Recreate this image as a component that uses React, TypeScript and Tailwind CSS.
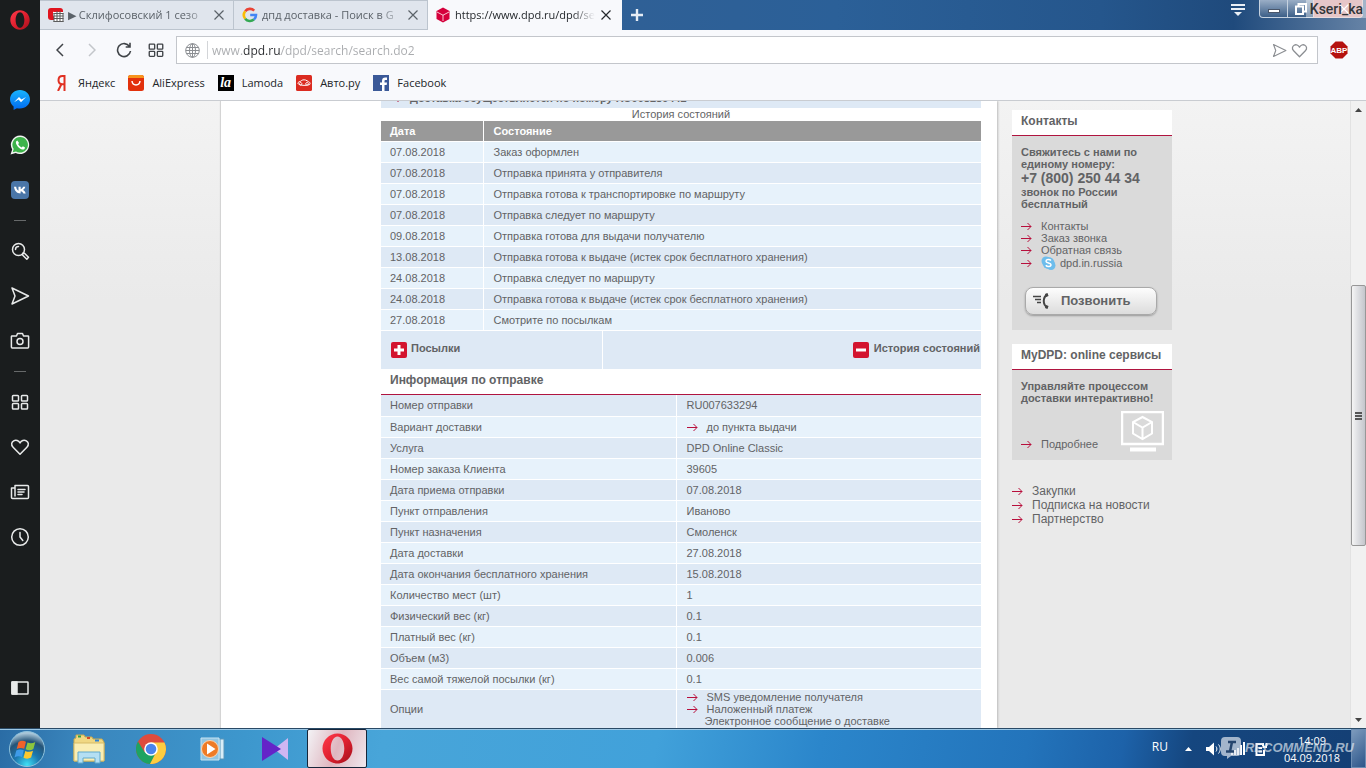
import type { ReactNode } from "react";

type StateRow = { date: string; state: string };

const tabs = [
  { title: "▶ Склифосовский 1 сезо", icon: "youtube", active: false },
  { title: "дпд доставка - Поиск в G", icon: "google", active: false },
  { title: "https://www.dpd.ru/dpd/se", icon: "dpd", active: true },
];

const bookmarks = [
  { label: "Яндекс", icon: "yandex" },
  { label: "AliExpress", icon: "ali" },
  { label: "Lamoda", icon: "lamoda" },
  { label: "Авто.ру", icon: "auto" },
  { label: "Facebook", icon: "facebook" },
];

const states: StateRow[] = [
  { date: "07.08.2018", state: "Заказ оформлен" },
  { date: "07.08.2018", state: "Отправка принята у отправителя" },
  { date: "07.08.2018", state: "Отправка готова к транспортировке по маршруту" },
  { date: "07.08.2018", state: "Отправка следует по маршруту" },
  { date: "09.08.2018", state: "Отправка готова для выдачи получателю" },
  {
    date: "13.08.2018",
    state: "Отправка готова к выдаче (истек срок бесплатного хранения)",
  },
  { date: "24.08.2018", state: "Отправка следует по маршруту" },
  {
    date: "24.08.2018",
    state: "Отправка готова к выдаче (истек срок бесплатного хранения)",
  },
  { date: "27.08.2018", state: "Смотрите по посылкам" },
];

const info = [
  ["Номер отправки", "RU007633294"],
  ["Вариант доставки", "до пункта выдачи"],
  ["Услуга", "DPD Online Classic"],
  ["Номер заказа Клиента", "39605"],
  ["Дата приема отправки", "07.08.2018"],
  ["Пункт отправления", "Иваново"],
  ["Пункт назначения", "Смоленск"],
  ["Дата доставки", "27.08.2018"],
  ["Дата окончания бесплатного хранения", "15.08.2018"],
  ["Количество мест (шт)", "1"],
  ["Физический вес (кг)", "0.1"],
  ["Платный вес (кг)", "0.1"],
  ["Объем (м3)", "0.006"],
  ["Вес самой тяжелой посылки (кг)", "0.1"],
];

function OperaLogo({ size, id }: { size: number; id: string }) {
  return (
    <svg width={size} height={size} viewBox="0 0 32 32">
      <defs>
        <linearGradient id={id} x1="0" y1="0" x2="1" y2="1">
          <stop offset="0" stopColor="#ff3b4c" />
          <stop offset="0.5" stopColor="#e0202f" />
          <stop offset="1" stopColor="#a3101c" />
        </linearGradient>
      </defs>
      <path
        fill={`url(#${id})`}
        fillRule="evenodd"
        d="M16 0.5C7.5 0.5 0.5 7.4 0.5 16S7.500 31.500 16 31.500 31.500 24.600 31.500 16 24.500 0.500 16 0.500Zm0 3c4 0 7 5.400 7 12.500s-3 12.500-7 12.500-7-5.400-7-12.500S12 3.500 16 3.500Z"
      />
    </svg>
  );
}

function Line({ children, size = 20 }: { children: ReactNode; size?: number }) {
  return (
    <svg
      width={size}
      height={size}
      viewBox="0 0 20 20"
      fill="none"
      stroke="currentColor"
      strokeWidth="1.5"
      strokeLinecap="round"
      strokeLinejoin="round"
    >
      {children}
    </svg>
  );
}

function GridIcon({ size }: { size?: number }) {
  return (
    <Line size={size}>
      <rect x="2.500" y="3.500" width="6" height="5.500" rx="0.800" />
      <rect x="11.500" y="3.500" width="6" height="5.500" rx="0.800" />
      <rect x="2.500" y="11.500" width="6" height="5.500" rx="0.800" />
      <rect x="11.500" y="11.500" width="6" height="5.500" rx="0.800" />
    </Line>
  );
}

function HeartIcon({ size }: { size?: number }) {
  return (
    <Line size={size}>
      <path d="M10 17.300 3.100 10.300C.6 7.700 1.700 4.900 3.700 3.800 6 2.500 8.700 3.600 10 6c1.300-2.400 4-3.500 6.300-2.200 2 1.100 3.100 3.900.6 6.500L10 17.300Z" />
    </Line>
  );
}

function SendIcon({ size }: { size?: number }) {
  return (
    <Line size={size}>
      <path d="M2 2 18.500 10 2 18l3-8L2 2Z" />
    </Line>
  );
}

function CloseIcon() {
  return (
    <svg width="10" height="10" viewBox="0 0 10 10" stroke="currentColor" strokeWidth="1.200">
      <path d="M.5.5l9 9M9.500.5l-9 9" />
    </svg>
  );
}

function Arrow() {
  return (
    <svg
      className="shrink-0"
      width="11"
      height="9"
      viewBox="0 0 11 9"
      fill="none"
      stroke="#b80f3c"
      strokeWidth="1"
    >
      <path d="M0 4.500h10M6.500 1l3.500 3.500L6.500 8" />
    </svg>
  );
}

function SiteIcon({ name }: { name: string }) {
  const common = { width: 16, height: 16, viewBox: "0 0 16 16", className: "shrink-0" };
  switch (name) {
    case "youtube":
      return (
        <svg {...common}>
          <rect y="1" width="15" height="12" rx="3" fill="#e0141e" />
          <path d="M5 4.500v5l3-2.500z" fill="#fff" />
          <rect x="6" y="5" width="9" height="10" fill="#fff" />
          <path
            d="M5.500 6.500h10M5.500 9h10M5.500 11.500h10M5.500 14.500h10M6 6v9M9 4v11M12 4v11M15 6v9"
            stroke="#5c5c5c"
            strokeWidth="1"
          />
        </svg>
      );
    case "google":
      return (
        <svg {...common} fill="none" strokeWidth="2.600">
          <path d="M3.200 4.300A6 6 0 0 1 12.200 3.600" stroke="#ea4335" />
          <path d="M3.200 4.300a6 6 0 0 0 0 7.400" stroke="#fbbc05" />
          <path d="M3.200 11.700a6 6 0 0 0 8.700.9" stroke="#34a853" />
          <path d="M11.900 12.600A6 6 0 0 0 14 8H8.200" stroke="#4285f4" />
        </svg>
      );
    case "dpd":
      return (
        <svg {...common}>
          <path d="M8 .5 14.500 4v8L8 15.500 1.500 12V4z" fill="#d5003c" />
          <path d="m2 5 6 3.200L14 5M8 8v6" stroke="#f8c6d3" fill="none" />
        </svg>
      );
    case "yandex":
      return (
        <svg {...common} fill="none" stroke="#e03022" strokeWidth="2">
          <path d="M10.500 16V1H8.500C5.800 1 4.500 3 4.500 5.200s1.200 4 4 4h2M7.500 9 4 16" />
        </svg>
      );
    case "ali":
      return (
        <svg {...common}>
          <rect width="16" height="16" rx="2.500" fill="#e2310c" />
          <path d="M0 3V2.500A2.500 2.500 0 0 1 2.500 0h11A2.500 2.500 0 0 1 16 2.500V3z" fill="#f7941d" />
          <path d="M4 6c.6 5.300 7.400 5.300 8 0" stroke="#fff" strokeWidth="1.500" fill="none" />
        </svg>
      );
    case "lamoda":
      return (
        <span className="flex size-4 shrink-0 items-center justify-center bg-black font-['Liberation_Serif',serif] text-sm leading-4 font-bold text-white italic">
          la
        </span>
      );
    case "auto":
      return (
        <svg {...common}>
          <rect width="16" height="16" rx="1.500" fill="#db2b20" />
          <path
            d="M2 8.500C2 6.800 3.500 6.500 4.800 6.200 6 4.800 7.500 4.600 9.500 5c1.500.3 2 1.300 3 1.700 1.300.4 1.700 1.300 1.500 2.500-1 1.500-11 1.800-12-.7Zm2.500-1a1.300 1.300 0 1 0 .1 0m6.400 0a1.300 1.300 0 1 0 .1 0"
            stroke="#fff"
            fill="none"
          />
        </svg>
      );
    default:
      return (
        <svg {...common}>
          <rect width="16" height="16" fill="#3b5998" />
          <path
            d="M9 16v-6H7V7.500h2V6c0-2.300 1.200-3.400 3.300-3.400H14V5h-1.300C11.800 5 11.500 5.400 11.500 6.200v1.300H14L13.700 10h-2.200v6z"
            fill="#fff"
          />
        </svg>
      );
  }
}

function SideButton({ label, children }: { label: string; children: ReactNode }) {
  return (
    <button aria-label={label} className="flex h-[45px] w-full items-center justify-center">
      {children}
    </button>
  );
}

function SideRule() {
  return (
    <div className="flex h-4 items-center">
      <div className="h-px w-3 bg-[#66696a]" />
    </div>
  );
}

function OperaSidebar() {
  return (
    <nav className="flex w-10 shrink-0 flex-col items-center bg-[#1a1d1e] pb-[18px] text-[#e8eaea]">
      <button aria-label="Меню" className="mb-[37px] flex size-10 items-center justify-center">
        <OperaLogo size={20} id="side-opera" />
      </button>
      <SideButton label="Messenger">
        <svg width="20" height="20" viewBox="0 0 20 20">
          <defs>
            <linearGradient id="msg" x1="0" y1="0" x2="0" y2="1">
              <stop offset="0" stopColor="#18b4ff" />
              <stop offset="1" stopColor="#0068f0" />
            </linearGradient>
          </defs>
          <path
            d="M10 0C4.400 0 0 4.100 0 9.300c0 2.900 1.400 5.500 3.600 7.200V20l3.300-1.800c1 .3 2 .4 3.100.4 5.600 0 10-4.100 10-9.300S15.600 0 10 0Z"
            fill="url(#msg)"
          />
          <path d="m4 12.200 5-5.300 2.500 2.600 4.500-2.600-5 5.300-2.500-2.600z" fill="#fff" />
        </svg>
      </SideButton>
      <SideButton label="WhatsApp">
        <svg width="20" height="20" viewBox="0 0 20 20">
          <path
            d="M10.200.5a9.300 9.300 0 0 0-8 14L.5 19.500l5.200-1.400A9.300 9.300 0 1 0 10.200.5Z"
            fill="#f2f5f2"
          />
          <path
            d="M10.200 2a7.800 7.800 0 0 0-6.500 12.100l-1 3.200 3.300-.9A7.800 7.800 0 1 0 10.200 2Z"
            fill="#3db34a"
          />
          <path
            d="M7.300 5.500c-1.800.7-1.700 2.500-.7 4.200 1.400 2.400 3 3.900 5.400 4.700 1.700.5 3-.5 3-2l-2.100-1.200-1.200 1.200c-1.700-.7-2.900-1.900-3.600-3.300l1-1.200z"
            fill="#fff"
          />
        </svg>
      </SideButton>
      <SideButton label="ВКонтакте">
        <svg width="18" height="18" viewBox="0 0 18 18">
          <rect width="18" height="18" rx="4" fill="#4a76a8" />
          <path
            d="M9.500 12.500C5.800 12.500 3.500 9.800 3 5.800h2.200c.2 2 1 3.400 2.300 3.900V5.800h2.200v2.400c1.200-.3 2-1.200 2.400-2.400h2.200c-.4 1.500-1.200 2.500-2.300 3.200 1.300.6 2.200 1.700 2.700 3.500h-2.300c-.5-1.200-1.400-2-2.700-2.300z"
            fill="#fff"
          />
        </svg>
      </SideButton>
      <SideRule />
      <SideButton label="Поиск">
        <Line>
          <circle cx="8.500" cy="8.500" r="6" />
          <path d="M5.500 8.500c0-1.800 1.200-3 3-3M13 12l1.500.3 4 4-1.700 2-4.300-4.300z" />
        </Line>
      </SideButton>
      <SideButton label="Поток">
        <SendIcon />
      </SideButton>
      <SideButton label="Снимок">
        <Line>
          <path d="M2 5h4.500L7.500 2.500h5l1 2.500H18a.6.6 0 0 1 .6.6v10.500a.8.800 0 0 1-.8.800H2.200a.8.800 0 0 1-.8-.8V5.600A.6.600 0 0 1 2 5Z" />
          <circle cx="10" cy="10.500" r="3" />
        </Line>
      </SideButton>
      <SideRule />
      <SideButton label="Экспресс-панель">
        <GridIcon />
      </SideButton>
      <SideButton label="Закладки">
        <HeartIcon />
      </SideButton>
      <SideButton label="Новости">
        <Line>
          <path d="M5 3.500h12.500a1 1 0 0 1 1 1v11a1 1 0 0 1-1 1h-15a1 1 0 0 1-1-1v-9.500H5m0-2.500V14M8 7.500h7M8 10h6M8 12.500h4" />
        </Line>
      </SideButton>
      <SideButton label="История">
        <Line>
          <circle cx="10" cy="10" r="8.300" />
          <path d="M10 5.500V10l2.800 3.500" />
        </Line>
      </SideButton>
      <div className="mt-auto w-full">
        <SideButton label="Боковая панель">
          <Line>
            <rect x="2" y="4" width="16" height="12" rx="0.500" />
            <path d="M2 4h5v12H2z" fill="currentColor" />
          </Line>
        </SideButton>
      </div>
    </nav>
  );
}

function TitleBar() {
  return (
    <div className="relative flex h-[30px] shrink-0 bg-[linear-gradient(90deg,#3a6b9f_0%,#2f6096_45%,#2b6098_60%,#25568c_80%,#1f4a7c_90%,#6683a6_100%)]">
      {tabs.map((tab) => (
        <div
          key={tab.icon}
          className={
            tab.active
              ? "flex w-[194px] items-center bg-[#f8f9fc] pr-[11px] pl-[7px] text-[#24282c]"
              : "flex w-[194px] items-center border-t border-r border-b border-[#bcc4ce] bg-[#e0e5ed] pr-[9px] pl-2 text-[#5b6269]"
          }
        >
          <SiteIcon name={tab.icon} />
          <button className="ml-1 h-5 flex-1 overflow-hidden text-left text-[11px] leading-5 whitespace-nowrap [mask-image:linear-gradient(90deg,#000_84%,transparent)]">
            {tab.title}
          </button>
          <button aria-label="Закрыть вкладку" className="ml-1.5">
            <CloseIcon />
          </button>
        </div>
      ))}
      <button aria-label="Новая вкладка" className="flex w-[30px] items-center justify-center">
        <svg width="12" height="12" viewBox="0 0 12 12" stroke="#e6edf5" strokeWidth="2.400">
          <path d="M6 0v12M0 6h12" />
        </svg>
      </button>
      <div className="ml-auto flex items-start pr-[3px]">
        <button aria-label="Меню вкладок" className="mt-1 mr-3.5">
          <svg width="14" height="13" viewBox="0 0 14 13" fill="#e9eff6">
            <path d="M0 0h14v2H0zM0 4h14v2H0zM3 8h8l-4 4z" />
          </svg>
        </button>
        <button
          aria-label="Свернуть"
          className="flex h-[18px] w-[29px] items-center justify-center rounded-bl border border-t-0 border-[#c6d2e0] bg-[linear-gradient(#9aaec6,#3c5f88)] pt-1"
        >
          <svg width="12" height="4" viewBox="0 0 12 4">
            <rect x="0.500" y="0.500" width="11" height="3" fill="#fff" stroke="#49566a" />
          </svg>
        </button>
        <button
          aria-label="Развернуть"
          className="flex h-[18px] w-[25px] items-center justify-center border-b border-[#c6d2e0] bg-[linear-gradient(#9aaec6,#3c5f88)]"
        >
          <svg width="12" height="12" viewBox="0 0 12 12" fill="none" stroke="#fff" strokeWidth="2">
            <path d="M3.500 3V1H11v7.500H9M1 3.500h7V11H1z" />
          </svg>
        </button>
        <button
          aria-label="Закрыть"
          className="flex h-[18px] w-[50px] items-center justify-center rounded-br border border-t-0 border-[#dcc5c9] bg-[#d5a0a4] pl-3 text-white"
        >
          <CloseIcon />
        </button>
      </div>
      <div className="absolute top-0 right-0 h-[18px] bg-white/40 pr-[3px] pl-1 font-[Roboto,sans-serif] text-sm leading-[18px] font-medium text-[#33363a]">
        Kseri_ka
      </div>
    </div>
  );
}

function Toolbar() {
  return (
    <div className="flex h-10 shrink-0 items-center bg-[#f8f9fc] pr-[18px] pl-2.5 text-[#3f4347]">
      <button aria-label="Назад" className="flex w-5 justify-center">
        <svg width="8" height="14" viewBox="0 0 8 14" fill="none" stroke="currentColor" strokeWidth="1.500">
          <path d="m7 1-6 6 6 6" />
        </svg>
      </button>
      <button aria-label="Вперед" className="ml-3 flex w-5 justify-center text-[#c3c6ca]">
        <svg width="8" height="14" viewBox="0 0 8 14" fill="none" stroke="currentColor" strokeWidth="1.500">
          <path d="m1 1 6 6-6 6" />
        </svg>
      </button>
      <button aria-label="Обновить" className="ml-3 flex w-5 justify-center">
        <svg width="16" height="16" viewBox="0 0 16 16" fill="none" stroke="currentColor" strokeWidth="1.600">
          <path d="M13.500 4.500A6.500 6.500 0 1 0 14.500 9M14 .8V5H9.700" />
        </svg>
      </button>
      <button aria-label="Экспресс-панель" className="ml-3 flex w-5 justify-center">
        <GridIcon size={18} />
      </button>
      <div className="ml-2.5 flex h-7 flex-1 items-center border border-[#c3c6cb] bg-white pr-[9px] pl-2 text-[#8b8e92]">
        <svg width="15" height="15" viewBox="0 0 15 15" fill="none" stroke="currentColor">
          <circle cx="7.500" cy="7.500" r="6.800" />
          <ellipse cx="7.500" cy="7.500" rx="3" ry="6.800" />
          <path d="M7.500.7v13.600M.7 7.500h13.600M1.500 4.500h12M1.500 10.500h12" />
        </svg>
        <div className="ml-[7px] h-[18px] w-px bg-[#d3d5d8]" />
        <input
          aria-label="Адрес"
          defaultValue="www.dpd.ru/dpd/search/search.do2"
          className="ml-1 h-6 min-w-0 flex-1 bg-[linear-gradient(90deg,#a9abae_31px,#2b2d30_31px,#2b2d30_69px,#a9abae_69px)] bg-clip-text text-xs text-transparent outline-none"
        />
        <button aria-label="Отправить в Поток" className="mr-1">
          <SendIcon size={15} />
        </button>
        <button aria-label="В закладки">
          <HeartIcon size={17} />
        </button>
      </div>
      <button aria-label="Adblock Plus" className="ml-3">
        <svg width="18" height="18" viewBox="0 0 18 18">
          <path d="M5.500.5h7l5 5v7l-5 5h-7l-5-5v-7z" fill="#b5120f" />
          <text
            x="9"
            y="12"
            textAnchor="middle"
            fontSize="8"
            fontWeight="bold"
            fontFamily="Liberation Sans, sans-serif"
            fill="#fff"
          >
            ABP
          </text>
        </svg>
      </button>
    </div>
  );
}

function Bookmarks() {
  return (
    <div className="flex h-[31px] shrink-0 items-center gap-[13px] border-b border-[#c9ccd1] bg-[#f8f9fc] pb-1 pl-3.5 text-[11px] text-[#222528]">
      {bookmarks.map((item) => (
        <a key={item.label} href="#" className="flex items-center gap-2">
          <SiteIcon name={item.icon} />
          {item.label}
        </a>
      ))}
    </div>
  );
}

function ArrowLink({ children }: { children: ReactNode }) {
  return (
    <li>
      <a href="#" className="flex items-center gap-[9px]">
        <Arrow />
        {children}
      </a>
    </li>
  );
}

function Tracking() {
  return (
    <main className="w-[777px] shrink-0 border-l border-[#d4d4d4] bg-white pr-4 pl-40 shadow-[1px_0_2px_#bbb]">
      <div className="flex h-[7px] items-end overflow-hidden bg-[#dee9f5] pb-1 pl-2.5 font-bold">
        <p className="flex items-center gap-2 leading-3">
          <Arrow />
          Доставка осуществляется по номеру RU008286442
        </p>
      </div>

      <table className="w-full table-fixed">
        <caption className="h-[13px] leading-[13px]">История состояний</caption>
        <colgroup>
          <col className="w-[102px]" />
          <col />
        </colgroup>
        <thead>
          <tr className="h-5 border-b border-white bg-[#999] text-left text-white">
            <th className="border-r border-white pl-[9px]">Дата</th>
            <th className="pl-2.5">Состояние</th>
          </tr>
        </thead>
        <tbody>
          {states.map((row, i) => (
            <tr
              key={i}
              className="h-[21px] border-b border-white odd:bg-[#e7f2fb] even:bg-[#dee9f5]"
            >
              <td className="border-r border-white pl-[9px]">{row.date}</td>
              <td className="pl-2.5">{row.state}</td>
            </tr>
          ))}
        </tbody>
      </table>

      <div className="flex h-[38px] bg-[#dee9f5] font-bold">
        <button className="flex w-[222px] items-center gap-1 border-r border-white pl-2.5">
          <svg width="16" height="16" viewBox="0 0 16 16">
            <rect width="16" height="16" rx="2" fill="#d3142f" />
            <path d="M8 3v10M3 8h10" stroke="#fff" strokeWidth="3" />
          </svg>
          <span className="pb-1">Посылки</span>
        </button>
        <button className="flex flex-1 items-center justify-end gap-[5px] pr-px">
          <svg width="16" height="16" viewBox="0 0 16 16">
            <rect width="16" height="16" rx="2" fill="#d3142f" />
            <path d="M3 8h10" stroke="#fff" strokeWidth="3" />
          </svg>
          <span className="pb-1">История состояний</span>
        </button>
      </div>

      <h2 className="h-[26px] border-b border-[#b0143f] pl-[9px] text-xs leading-[22px] font-bold">
        Информация по отправке
      </h2>
      <table className="w-full table-fixed">
        <colgroup>
          <col className="w-[295px]" />
          <col />
        </colgroup>
        <tbody>
          {info.map(([label, value], i) => (
            <tr
              key={label}
              className="h-[21px] border-b border-white first:h-[22px] odd:bg-[#dee9f5] even:bg-[#e7f2fb]"
            >
              <td className="border-r border-white pl-[9px]">{label}</td>
              <td className="pl-2.5">
                {i === 1 ? (
                  <a href="#" className="flex items-center gap-[9px]">
                    <Arrow />
                    {value}
                  </a>
                ) : (
                  value
                )}
              </td>
            </tr>
          ))}
          <tr className="bg-[#dee9f5]">
            <td className="border-r border-white pl-[9px]">Опции</td>
            <td className="py-px pl-2.5 leading-3">
              <ul>
                <ArrowLink>SMS уведомление получателя</ArrowLink>
                <ArrowLink>Наложенный платеж</ArrowLink>
                <li className="pl-[18px]">Электронное сообщение о доставке</li>
              </ul>
            </td>
          </tr>
        </tbody>
      </table>
    </main>
  );
}

function SideCards() {
  return (
    <aside className="ml-[15px] w-40 shrink-0 pt-[9px]">
      <section className="h-[220px] bg-[#dadada]">
        <h3 className="h-[26px] border-b border-[#b0143f] bg-white pl-[9px] text-xs leading-[22px] font-bold">
          Контакты
        </h3>
        <div className="pt-2.5 pl-[9px] leading-3">
          <p className="font-bold">
            Свяжитесь с нами по
            <br />
            единому номеру:
            <span className="block text-sm leading-4">+7 (800) 250 44 34</span>
            звонок по России
            <br />
            бесплатный
          </p>
          <ul className="mt-2.5">
            <ArrowLink>Контакты</ArrowLink>
            <ArrowLink>Заказ звонка</ArrowLink>
            <ArrowLink>Обратная связь</ArrowLink>
            <ArrowLink>
              <span className="flex items-center gap-1">
                <svg width="15" height="14" viewBox="0 0 15 14">
                  <circle cx="5" cy="5" r="4.500" fill="#6dbdec" />
                  <circle cx="10" cy="9.500" r="4.500" fill="#6dbdec" />
                  <circle cx="7.500" cy="7" r="6" fill="#6dbdec" />
                  <path
                    d="M10 4.500C8.500 3 5 3.200 5 5.200c0 2.300 5 1.200 5 3.500 0 2.200-4 2.200-5.200.5"
                    stroke="#fff"
                    strokeWidth="1.500"
                    fill="none"
                  />
                </svg>
                dpd.in.russia
              </span>
            </ArrowLink>
          </ul>
        </div>
        <button className="mt-[17px] ml-[13px] flex h-7 w-[132px] items-center rounded-lg border border-[#a9a9a9] bg-[linear-gradient(#fdfdfd,#dcdcdc)] pl-[7px] text-[13px] font-bold shadow-[0_1px_2px_#999]">
          <svg width="16" height="16" viewBox="0 0 16 16" fill="none" stroke="#444">
            <path d="M0 3.500h8M2 6.500h6M4 9.500h4" strokeWidth="1.500" />
            <path d="M14.500 1.500c-5 2.500-5 10.500 0 13" strokeWidth="2" />
            <path d="M12.500 2.500 15 1.500M12.500 13.500l2.500 1" strokeWidth="3" />
          </svg>
          <span className="ml-3">Позвонить</span>
        </button>
      </section>

      <section className="mt-3.5 h-[116px] bg-[#dadada]">
        <h3 className="h-[26px] border-b border-[#b0143f] bg-white pl-[9px] text-xs leading-[22px] font-bold">
          MyDPD: online сервисы
        </h3>
        <div className="pt-2.5 pr-2 pl-[9px] leading-3">
          <p className="font-bold">
            Управляйте процессом доставки интерактивно!
          </p>
          <div className="mt-[7px] flex items-start justify-between">
            <ul className="pt-[27px]">
              <ArrowLink>Подробнее</ArrowLink>
            </ul>
            <svg width="43" height="42" viewBox="0 0 43 42" fill="none" stroke="#fff">
              <rect x="1" y="1" width="41" height="32" strokeWidth="2.500" />
              <path d="M9 38.500h26" strokeWidth="4" />
              <path
                d="M21.500 6 31 11v11.500L21.500 28 12 22.500V11zM12 11l9.500 5.500L31 11M21.500 16.500V28"
                strokeWidth="2"
              />
            </svg>
          </div>
        </div>
      </section>

      <ul className="mt-6 text-xs leading-[14px]">
        <ArrowLink>Закупки</ArrowLink>
        <ArrowLink>Подписка на новости</ArrowLink>
        <ArrowLink>Партнерство</ArrowLink>
      </ul>
    </aside>
  );
}

function ScrollBar() {
  return (
    <div className="flex w-4 shrink-0 flex-col border-l border-[#e2e2e2] bg-[#f1f1f1]">
      <div className="flex h-[17px] items-center justify-center">
        <svg width="7" height="4" viewBox="0 0 7 4">
          <path d="M0 4 3.500 0 7 4z" fill="#444" />
        </svg>
      </div>
      <div className="flex-[168]" />
      <div className="flex flex-[259] flex-col items-center justify-center gap-px rounded-xs border border-[#979797] bg-[linear-gradient(90deg,#f5f5f5,#e0e1e4_40%,#c4c6cc)]">
        <div className="h-0.5 w-[7px] bg-[#555]" />
        <div className="h-0.5 w-[7px] bg-[#555]" />
        <div className="h-0.5 w-[7px] bg-[#555]" />
      </div>
      <div className="flex-[166]" />
      <div className="flex h-[17px] items-center justify-center">
        <svg width="7" height="4" viewBox="0 0 7 4">
          <path d="M0 0h7L3.500 4z" fill="#444" />
        </svg>
      </div>
    </div>
  );
}

function TaskButton({ label, children }: { label: string; children: ReactNode }) {
  return (
    <button aria-label={label} className="flex w-[60px] items-center justify-center">
      {children}
    </button>
  );
}

function Taskbar() {
  return (
    <footer className="relative flex h-10 shrink-0 gap-0.5 border-t border-[#2a4a66] bg-[linear-gradient(100deg,#2a6ca5_0%,#3a86bd_6%,#3d97cd_18%,#48a5d9_28%,#41a1da_48%,#2b86cb_60%,#2374bb_75%,#1d62a9_82%,#15467f_87%,#143f74_100%)] shadow-[inset_0_1px_0_#9cc8e6]">
      <button aria-label="Пуск" className="mr-[3px] flex w-[54px] items-center justify-center">
        <svg width="38" height="38" viewBox="0 0 38 38">
          <defs>
            <radialGradient id="orb" cx="0.500" cy="0.950" r="0.900">
              <stop offset="0" stopColor="#3fe0f5" />
              <stop offset="0.400" stopColor="#1c78b0" />
              <stop offset="0.750" stopColor="#255478" />
              <stop offset="1" stopColor="#a9c6d8" />
            </radialGradient>
          </defs>
          <circle cx="19" cy="19" r="17.500" fill="url(#orb)" stroke="#8fc3dd" />
          <path d="M10.500 12c2.500-1.700 5-1.700 7.500-.2l-1.800 7c-2.500-1.300-5-1.200-7.500.3z" fill="#f0622a" />
          <path d="M19.500 12.500c2.500 1.200 5 1.100 7.800-.5l-1.900 7c-2.600 1.600-5.100 1.500-7.700.3z" fill="#8cc63e" />
          <path d="M8.300 20.600c2.500-1.500 5-1.500 7.500-.3L14 27c-2.500-1.300-5-1.100-7.500.4z" fill="#3f9be8" />
          <path d="M17.300 20.900c2.500 1.200 5 1.200 7.700-.2l-1.900 6.900c-2.600 1.500-5.100 1.400-7.600.1z" fill="#fdc82f" />
        </svg>
      </button>
      <TaskButton label="Проводник">
        <svg width="32" height="30" viewBox="0 0 32 30">
          <path d="M1 27V5l2-1V1h8l1 2h7l1 2h9l2 3v19z" fill="#f0d883" stroke="#c9a94d" />
          <path d="M5 1.500h3v2H5z" fill="#30a14a" />
          <path d="M14 3h3v2h-3z" fill="#d24a28" />
          <path d="M22 5.500h4v2h-4z" fill="#2f82d2" />
          <path d="M1 9h30v18H1z" fill="#faeeb4" stroke="#d6bb66" />
          <path d="M5 29V18h22v11h-5v-5H10v5z" fill="#b4dff3" stroke="#61a9cc" />
        </svg>
      </TaskButton>
      <TaskButton label="Chrome">
        <svg width="30" height="30" viewBox="0 0 30 30">
          <circle cx="15" cy="15" r="15" fill="#dd4b3e" />
          <path d="M2 7.500A15 15 0 0 0 14 30l5-8.500L15 15 8.500 18z" fill="#1da362" />
          <path d="M14 30A15 15 0 0 0 28.500 8.500H15l6.500 7z" fill="#fdcd40" />
          <circle cx="15" cy="15" r="6.800" fill="#fff" />
          <circle cx="15" cy="15" r="5.300" fill="#4a84ec" />
        </svg>
      </TaskButton>
      <TaskButton label="Проигрыватель">
        <svg width="26" height="24" viewBox="0 0 26 24">
          <path d="M16 2h8v20h-8z" fill="#d9edf7" stroke="#5996ba" />
          <path d="M20 2v20" stroke="#5996ba" />
          <path d="M1 1h18v22H1z" fill="#91c5e2" stroke="#c8e4f2" />
          <circle cx="10" cy="12" r="8.500" fill="#ee7b26" stroke="#fbd6b2" />
          <path d="M7 6.500v11l8.500-5.500z" fill="#fff" />
        </svg>
      </TaskButton>
      <TaskButton label="KMPlayer">
        <svg width="28" height="24" viewBox="0 0 28 24">
          <path d="M27 1v22L13 12z" fill="#cfb6f2" />
          <path d="M1 0v24l19-12z" fill="#6424c8" />
        </svg>
      </TaskButton>
      <button
        aria-label="Opera"
        className="flex w-[60px] items-center justify-center rounded-xs border border-[#16263a] bg-[linear-gradient(110deg,#f3f3f6,#dfb6bf_50%,#efe8ee)]"
      >
        <OperaLogo size={31} id="task-opera" />
      </button>

      <div className="ml-auto flex items-center text-white">
        <span className="mr-[17px] pb-1 text-xs">RU</span>
        <svg className="mr-3.5" width="7" height="4" viewBox="0 0 7 4" fill="#fff">
          <path d="M0 4 3.500 0 7 4z" />
        </svg>
        <svg className="mr-[9px]" width="16" height="14" viewBox="0 0 16 14" fill="none" stroke="#fff">
          <path d="M0 5h3l5-4.500v13L3 9H0z" fill="#fff" stroke="none" />
          <path d="M10 4.500c1.200 1.500 1.200 3.500 0 5M12.500 2.500c2.300 2.700 2.300 6.300 0 9" />
        </svg>
        <svg className="mr-2.5" width="14" height="13" viewBox="0 0 14 13" fill="#fff">
          <path d="M0 10h2v3H0zM3 8h2v5H3zM6 6h2v7H6zM9 3h2v10H9zM12 0h2v13h-2z" />
        </svg>
        <svg className="mr-4" width="13" height="14" viewBox="0 0 13 14" fill="none" stroke="#fff" strokeWidth="2">
          <path d="M7 2H1.500v11H9V8M3.500 6h3.500M3.500 9.500h3.500M8 1v3M11.500 1v3M7.500 5h4.500" />
        </svg>
        <time className="mr-[11px] w-[56px] text-center text-[11px] leading-[17px]">
          14:09
          <br />
          04.09.2018
        </time>
        <button
          aria-label="Показать рабочий стол"
          className="h-full w-[15px] border border-[#6c8db3] bg-[linear-gradient(135deg,#7d9bbd,#2d568a)]"
        />
      </div>

      <div className="absolute top-2 right-3 flex items-center text-[#dfe6ee]/70">
        <svg width="20" height="22" viewBox="0 0 20 22">
          <path
            d="M4 0h12a4 4 0 0 1 4 4v11a4 4 0 0 1-4 4h-6l-4 3v-3H4a4 4 0 0 1-4-4V4a4 4 0 0 1 4-4Z"
            fill="currentColor"
          />
          <path d="M7 5h8M5 14.500h8M11 5 9 14.500" stroke="#26456e" strokeWidth="2.500" />
        </svg>
        <span className="ml-1 font-['Liberation_Sans',sans-serif] text-[13px] font-bold italic">
          RECOMMEND.RU
        </span>
      </div>
    </footer>
  );
}

export default function App() {
  return (
    <div className="flex h-screen flex-col overflow-hidden font-['Open_Sans',sans-serif]">
      <div className="flex min-h-0 flex-1">
        <OperaSidebar />
        <div className="flex min-w-0 flex-1 flex-col">
          <TitleBar />
          <Toolbar />
          <Bookmarks />
          <div className="flex min-h-0 flex-1">
            <div className="flex flex-1 justify-center overflow-hidden bg-[linear-gradient(#f3f3f3,#eaeaea_200px)] pl-0.5 font-['Liberation_Sans',sans-serif] text-[11px] leading-4 text-[#626365]">
              <Tracking />
              <SideCards />
            </div>
            <ScrollBar />
          </div>
        </div>
      </div>
      <Taskbar />
    </div>
  );
}
